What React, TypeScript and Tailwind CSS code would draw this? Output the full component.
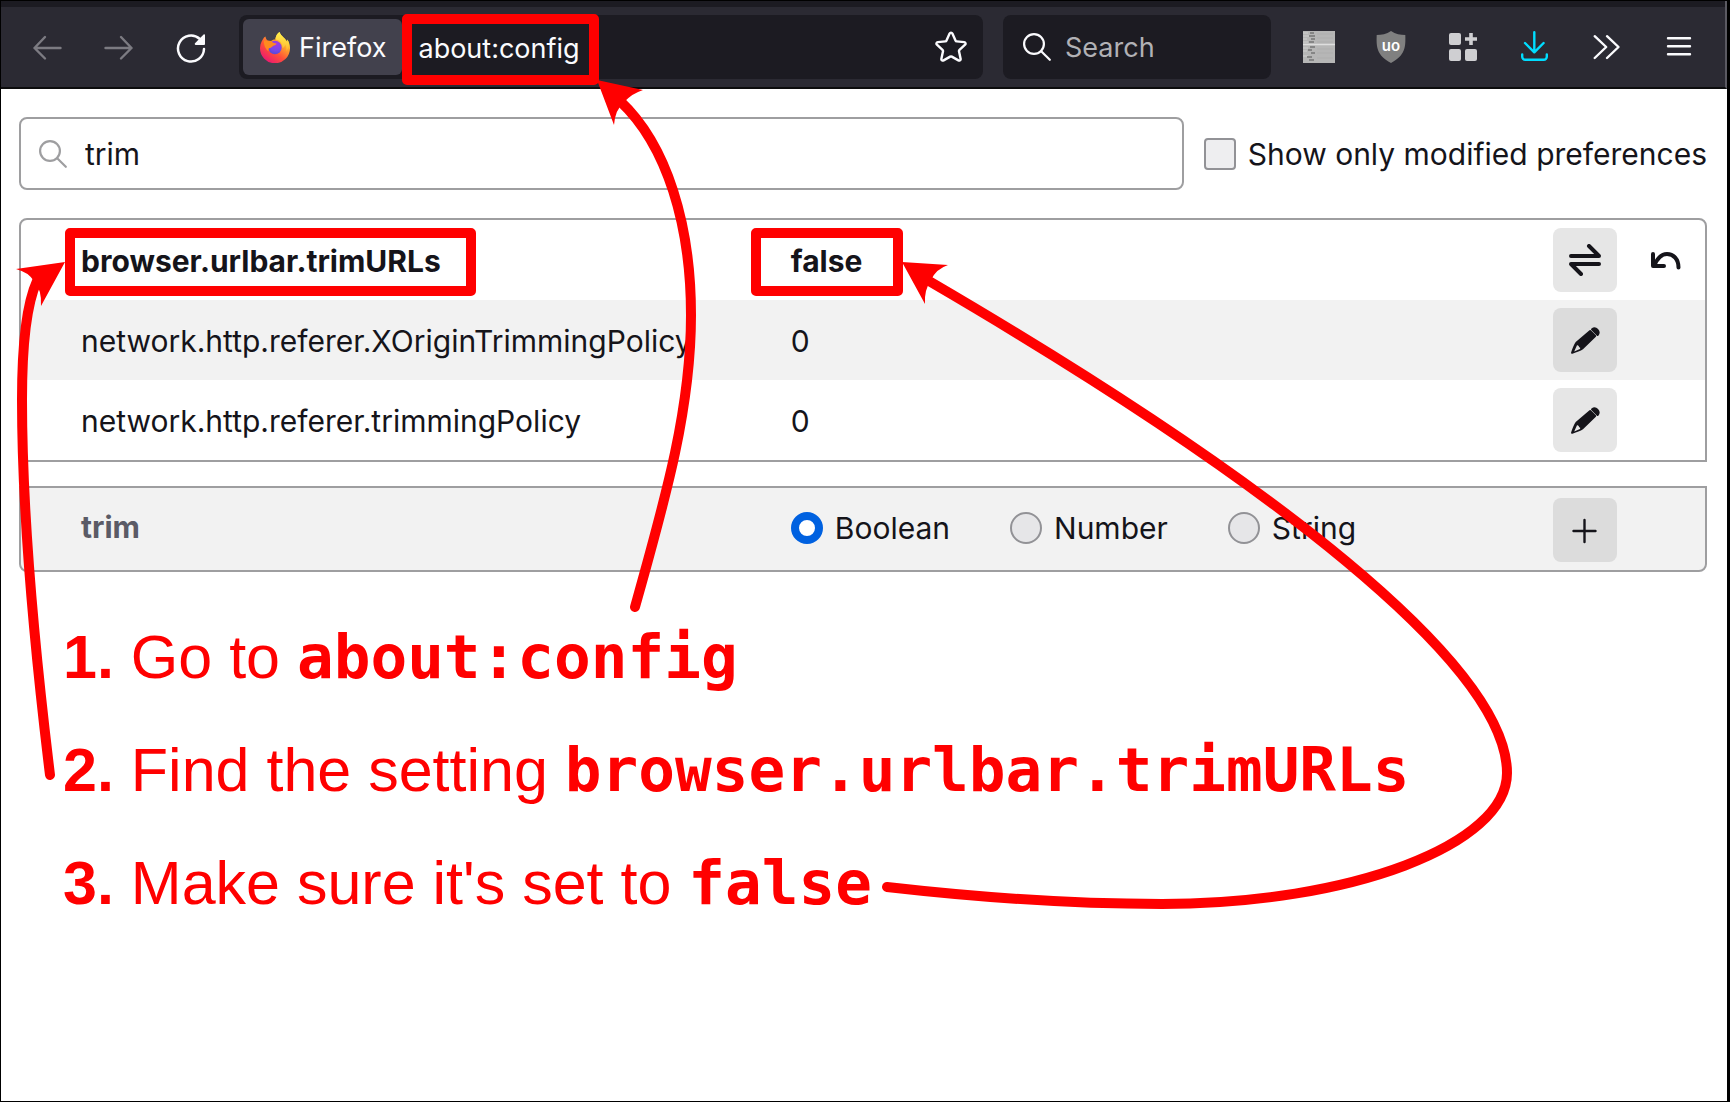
import React from "react";

type IconProps = { className?: string };

function ArrowLeft({ className = "" }: IconProps) {
  return (
    <svg viewBox="0 0 32 32" className={`size-8 ${className}`} fill="none" stroke="currentColor" strokeWidth="2.4" strokeLinecap="round" strokeLinejoin="round" aria-hidden="true">
      <path d="M29.500 17H3.500M14 6 3.500 17 14 27.500" />
    </svg>
  );
}

function ReloadIcon() {
  return (
    <svg viewBox="0 0 32 32" className="size-8" fill="none" aria-hidden="true">
      <path d="M29 18A13 13 0 1 1 24.600 7.800" stroke="currentColor" strokeWidth="2.500" strokeLinecap="round" />
      <path d="M30 4v9a1 1 0 0 1-1 1h-8.300c-.9 0-1.300-1-.7-1.700L28.600 3.500c.6-.6 1.400-.2 1.400.5z" fill="currentColor" />
    </svg>
  );
}

function FirefoxLogo() {
  return (
    <svg viewBox="0 0 32 32" className="size-8 shrink-0" aria-hidden="true">
      <defs>
        <linearGradient id="flame" x1="0.85" y1="0.1" x2="0.2" y2="1">
          <stop offset="0" stopColor="#fff44f" />
          <stop offset="0.3" stopColor="#ffa12c" />
          <stop offset="0.6" stopColor="#ff4f38" />
          <stop offset="1" stopColor="#e8107a" />
        </linearGradient>
        <linearGradient id="tail" x1="0.6" y1="0" x2="0.5" y2="1">
          <stop offset="0" stopColor="#fff44f" />
          <stop offset="1" stopColor="#ffb52e" />
        </linearGradient>
        <radialGradient id="globe" cx="0.6" cy="0.2" r="0.9">
          <stop offset="0" stopColor="#a43ae0" />
          <stop offset="0.6" stopColor="#7548e8" />
          <stop offset="1" stopColor="#4b4ad0" />
        </radialGradient>
      </defs>
      <path d="M5 6.500C3.500 9 1.200 12 1 17a15 15 0 0 0 30 .5c.2-4-1.200-7-3-9 .3 1.300.3 2 .2 2.800C26.500 7 22 5.500 20.500 1 17 3.500 16.500 7 16.500 8.500c-2-.1-3.500.6-4.500 1.500-1-.4-2-.4-3-.2C7.500 9 6.800 7.500 6.500 5.500z" fill="url(#flame)" />
      <path d="M20.500 1c-3.500 2.500-4 6-4 7.500 4 .5 7 3.500 7 8.500 1.500-.6 2.600-2 2.800-3.500 1 1.600 1.500 4 1 6.500 3.500-4 3.500-9 .7-11.500.3 1.300.3 2 .2 2.800C26.500 7 22 5.500 20.500 1z" fill="url(#tail)" />
      <circle cx="16" cy="16.500" r="6.700" fill="url(#globe)" />
      <path d="M5 9.500c2 .2 3 .4 4.500.3 1 .4 2 .4 3 .6 1.500 1 2.500 2 5 2.100-.3 1.500-2.500 2-3.500 2.500-1.500.8-1.500 2-3.200 2-1.300 0-1.800 1.500-1 3.500C6 18 4.500 13 5 9.500z" fill="#ff8a1f" />
    </svg>
  );
}

function StarIcon() {
  return (
    <svg viewBox="0 0 32 32" className="size-8 shrink-0" fill="none" stroke="currentColor" strokeWidth="2.400" strokeLinejoin="round" aria-hidden="true">
      <path d="M14.600 2.500c.6-1.200 2.200-1.200 2.800 0l3.100 7.100c.2.500.7.800 1.200.8l7.500.7c1.300.1 1.800 1.700.9 2.600l-5.600 5.100c-.4.400-.6.900-.5 1.400l1.600 7.600c.3 1.300-1.100 2.200-2.200 1.600l-6.600-3.800c-.5-.3-1.100-.3-1.600 0l-6.600 3.800c-1.100.6-2.500-.3-2.200-1.600L8 20.200c.1-.5-.1-1-.5-1.400l-5.600-5.100c-.9-.9-.4-2.500.9-2.600l7.500-.7c.5 0 1-.3 1.200-.8z" />
    </svg>
  );
}

function Magnifier({ className = "" }: IconProps) {
  return (
    <svg viewBox="0 0 28 28" className={`size-7 shrink-0 ${className}`} fill="none" stroke="currentColor" strokeWidth="2.200" strokeLinecap="round" aria-hidden="true">
      <circle cx="11" cy="11" r="9.900" />
      <path d="m18.200 18.200 8.600 8.600" />
    </svg>
  );
}

function PageThumbIcon() {
  return (
    <svg viewBox="0 0 32 32" className="size-8" aria-hidden="true">
      <rect width="32" height="32" fill="#b6b6b6" />
      <path d="M0 2h5M0 5h6M0 8h4M0 11h5M0 17h5M0 20h4M0 25h5" stroke="#c8c8c8" strokeWidth="1.500" />
      <path d="M7 2h4M6 5h6M8 8h4M6 11h5M7 16h5M5 19h4M8 22h4M4 26h5M6 29h5" stroke="#858585" strokeWidth="2.200" />
      <path d="M14 3h16M14 7h16M14 11h16M14 18h16M14 22h16M14 27h16" stroke="#adadad" strokeWidth="1.200" />
      <path d="M0 13.500h32" stroke="#dedede" strokeWidth="1.500" />
    </svg>
  );
}

function ShieldIcon() {
  return (
    <svg viewBox="0 0 32 32" className="size-8" aria-hidden="true">
      <path d="M16 0c4.500 3 9.500 4 14.300 4 .4 12 .2 20-14.300 28C1.500 24 1.300 16 1.700 4 6.500 4 11.500 3 16 0z" fill="#808080" />
      <text x="16" y="20" textAnchor="middle" fontSize="15" fontWeight="600" fontFamily="Inter, sans-serif" fill="#fff">uo</text>
    </svg>
  );
}

function GridPlusIcon() {
  return (
    <svg viewBox="0 0 32 32" className="size-8" fill="#cfcfd2" aria-hidden="true">
      <rect x="2" y="2" width="12" height="12" rx="2" />
      <rect x="2" y="18" width="12" height="12" rx="2" />
      <rect x="18" y="18" width="12" height="12" rx="2" />
      <path d="M22.200 2h3.600v4.200H30v3.600h-4.200V14h-3.600V9.800H18V6.200h4.200z" />
    </svg>
  );
}

function DownloadIcon() {
  return (
    <svg viewBox="0 0 32 32" className="size-8 text-[#00ddff]" fill="none" stroke="currentColor" strokeWidth="2.400" strokeLinecap="round" strokeLinejoin="round" aria-hidden="true">
      <path d="M15.300 1.200V21M6 12l9.300 9.300L24.600 12M3.200 23.500v2.300a3 3 0 0 0 3 3h18.600a3 3 0 0 0 3-3v-2.300" />
    </svg>
  );
}

function ChevronsIcon() {
  return (
    <svg viewBox="0 0 32 32" className="size-8" fill="none" stroke="currentColor" strokeWidth="2.400" strokeLinecap="round" strokeLinejoin="round" aria-hidden="true">
      <path d="M3.700 5.200 15.200 16 3.700 27M16 5.200 27.500 16 16 27" />
    </svg>
  );
}

function MenuIcon() {
  return (
    <svg viewBox="0 0 32 32" className="size-8" fill="none" stroke="currentColor" strokeWidth="2.400" strokeLinecap="round" aria-hidden="true">
      <path d="M5 7.300h22M5 15.300h22M5 23.300h22" />
    </svg>
  );
}

function ToggleIcon() {
  return (
    <svg viewBox="0 0 32 32" className="size-8" fill="none" stroke="currentColor" strokeWidth="4" strokeLinecap="round" strokeLinejoin="round" aria-hidden="true">
      <path d="M2 12h28L20 2M30 20H2l10 10" />
    </svg>
  );
}

function PencilIcon() {
  return (
    <svg viewBox="0 0 32 32" className="size-8" fill="currentColor" aria-hidden="true">
      <path d="M20.500 6.200a1 1 0 0 1 1.400.1l5 5a1 1 0 0 1 0 1.400L14 25.300c-2.500 1.700-6 3-10.600 4.400a1 1 0 0 1-1.300-1.300C3.600 23.800 5 20.500 6.700 18zM8 21.200 5.200 27.500l5.800-2.600c.5-.9.2-1.600-.8-1.700-.4-1.400-1.200-2-2.200-2z" fillRule="evenodd" />
      <path d="M22.500 4.500a5 5 0 0 1 7 7c-.6.700-1 .7-1.600.2L22.300 6c-.5-.5-.4-1 .2-1.500z" />
    </svg>
  );
}

function UndoIcon() {
  return (
    <svg viewBox="0 0 32 32" className="size-8" fill="none" stroke="currentColor" strokeWidth="4" strokeLinecap="round" strokeLinejoin="round" aria-hidden="true">
      <path d="M4 10v12h11M5.500 21C9 13 13 10 18 10 24.500 10 29.500 15 29.500 23.500" />
    </svg>
  );
}

function PlusIcon() {
  return (
    <svg viewBox="0 0 32 32" className="size-8" fill="none" stroke="currentColor" strokeWidth="2.400" strokeLinecap="round" aria-hidden="true">
      <path d="M4.500 17h22M15.500 6v22" />
    </svg>
  );
}

function ToolbarButton({ label, disabled, children }: { label: string; disabled?: boolean; children: React.ReactNode }) {
  return (
    <button type="button" aria-label={label} disabled={disabled} className="flex h-16 w-[72px] shrink-0 items-center justify-center text-[#fbfbfe] disabled:text-[#7c7b82]">
      {children}
    </button>
  );
}

function Toolbar() {
  return (
    <header className="border-r-2 border-b-2 border-r-[#5b5a62] border-b-[#0c0c0d] bg-[#2b2a33]">
      <div className="h-[6px] bg-[#1c1b22]" />
      <div className="flex items-center py-2 pr-[10px] pl-[10px]">
        <nav className="flex" aria-label="Navigation">
          <ToolbarButton label="Back" disabled><ArrowLeft /></ToolbarButton>
          <ToolbarButton label="Forward" disabled><ArrowLeft className="-scale-x-100" /></ToolbarButton>
          <ToolbarButton label="Reload"><ReloadIcon /></ToolbarButton>
        </nav>
        <div className="ml-3 flex h-16 min-w-0 flex-1 items-center rounded-lg bg-[#1c1b22] p-1 text-[27px] text-[#fbfbfe]">
          <button type="button" className="flex h-14 shrink-0 items-center gap-2 rounded-md bg-[#42414d] px-4">
            <FirefoxLogo />
            <span className="pt-0.5">Firefox</span>
          </button>
          <input aria-label="Address" defaultValue="about:config" className="h-14 min-w-0 flex-1 bg-transparent pt-0.5 pl-4 outline-none" />
          <button type="button" aria-label="Bookmark this page" className="flex h-14 w-14 items-center justify-center"><StarIcon /></button>
        </div>
        <label className="ml-5 flex h-16 w-[268px] items-center gap-[14px] rounded-lg bg-[#1c1b22] px-5 text-[27px] text-[#fbfbfe]">
          <Magnifier />
          <input aria-label="Search" placeholder="Search" className="w-full min-w-0 bg-transparent pt-0.5 outline-none placeholder:text-[#b1b1b5]" />
        </label>
        <div className="ml-3 flex">
          <ToolbarButton label="Page preview"><PageThumbIcon /></ToolbarButton>
          <ToolbarButton label="uBlock Origin"><ShieldIcon /></ToolbarButton>
          <ToolbarButton label="Add-ons"><GridPlusIcon /></ToolbarButton>
          <ToolbarButton label="Downloads"><DownloadIcon /></ToolbarButton>
          <ToolbarButton label="More tools"><ChevronsIcon /></ToolbarButton>
          <ToolbarButton label="Menu"><MenuIcon /></ToolbarButton>
        </div>
      </div>
    </header>
  );
}

const prefs = [
  { name: "browser.urlbar.trimURLs", value: "false", modified: true },
  { name: "network.http.referer.XOriginTrimmingPolicy", value: "0", modified: false },
  { name: "network.http.referer.trimmingPolicy", value: "0", modified: false },
];

function Columns() {
  return (
    <colgroup>
      <col className="w-[45%]" />
      <col />
      <col className="w-20" />
      <col className="w-[72px]" />
    </colgroup>
  );
}

function PrefTable() {
  return (
    <div className="overflow-hidden rounded-t-lg border-2 border-[#9e9ea0]">
      <table className="w-full table-fixed border-collapse">
        <Columns />
        <tbody>
          {prefs.map((p) => {
            const weight = p.modified ? "font-bold" : "font-normal";
            return (
              <tr key={p.name} className="group h-20 even:bg-[#f2f2f2]">
                <th scope="row" className={`p-0 pt-0.5 pl-[60px] text-left whitespace-nowrap ${weight}`}>{p.name}</th>
                <td className={`p-0 pt-0.5 pl-3 ${weight}`}>{p.value}</td>
                <td className="p-0">
                  <button type="button" aria-label={p.modified ? "Toggle" : "Edit"} className="flex size-16 items-center justify-center rounded-lg bg-[#e6e6e6] group-even:bg-[#dcdcdc]">
                    {p.modified ? <ToggleIcon /> : <PencilIcon />}
                  </button>
                </td>
                <td className="p-0">
                  {p.modified && (
                    <button type="button" aria-label="Reset" className="flex size-16 items-center justify-center rounded-lg">
                      <UndoIcon />
                    </button>
                  )}
                </td>
              </tr>
            );
          })}
        </tbody>
      </table>
    </div>
  );
}

function AddPref() {
  return (
    <div className="mt-6 overflow-hidden rounded-b-lg border-2 border-[#9e9ea0] bg-[#f2f2f2]">
      <table className="w-full table-fixed border-collapse">
        <Columns />
        <tbody>
          <tr className="h-[82px]">
            <th scope="row" className="p-0 pb-1 pl-[60px] text-left font-bold text-[#5b5b66]">trim</th>
            <td className="p-0 pb-[3px] pl-3">
              <div className="flex gap-[60px]">
                {["Boolean", "Number", "String"].map((type) => (
                  <label key={type} className="flex items-center gap-3">
                    <input type="radio" name="type" defaultChecked={type === "Boolean"} className="size-8 appearance-none rounded-full border-2 border-[#929296] bg-[#e6e6e8] checked:border-8 checked:border-[#0061e0] checked:bg-white" />
                    {type}
                  </label>
                ))}
              </div>
            </td>
            <td className="p-0 pt-0.5">
              <button type="button" aria-label="Add" className="flex size-16 items-center justify-center rounded-lg bg-[#dcdcdc]"><PlusIcon /></button>
            </td>
            <td className="p-0" />
          </tr>
        </tbody>
      </table>
    </div>
  );
}

function Steps() {
  const code = "font-['DejaVu_Sans_Mono',monospace] text-[61px] font-bold";
  return (
    <ol className="mt-[45px] flex flex-col gap-[33px] pl-[44px] font-['Liberation_Sans',Arial,sans-serif] text-[61px] leading-[80px] text-[#ff0000]">
      <li><b>1.</b> Go to <code className={code}>about:config</code></li>
      <li><b>2.</b> Find the setting <code className={code}>browser.urlbar.trimURLs</code></li>
      <li><b>3.</b> Make sure it's set to <code className={code}>false</code></li>
    </ol>
  );
}

/* Highlight frames and arrows that float over the window. */
function Annotations() {
  return (
    <svg width="1728" height="1100" viewBox="1 1 1728 1100" className="pointer-events-none absolute top-0 left-0" fill="none" stroke="#ff0000" strokeWidth="10" strokeLinejoin="round" strokeLinecap="round" aria-hidden="true">
      <rect x="407" y="19" width="187" height="61" />
      <rect x="70" y="233" width="401" height="58" />
      <rect x="756" y="233" width="142" height="58" />
      <path d="M635 607C665 500 691 410 691 315C691 225 667 145 620 101" />
      <path d="M50 775C36 660 22 520 22 400C22 350 26 305 37 281" />
      <path d="M887 887C1010 901 1100 904 1162 904C1350 904 1507 845 1507 773C1507 665 1270 480 929 281" />
      <g fill="#ff0000" stroke="none">
        <path d="M597 80 643 90Q633 93 624 102Q615 110 614 125z" />
        <path d="M65 262 16 269Q28 272 34 281Q42 290 41 306z" />
        <path d="M902 262 948 265Q936 269 931 280Q924 290 925 304z" />
      </g>
    </svg>
  );
}

export default function App() {
  return (
    <div className="relative min-h-screen overflow-hidden border border-r-3 border-black bg-white font-[Inter,sans-serif] text-[30px] leading-9 text-[#15141a]">
      <Toolbar />
      <main className="pt-7 pr-5 pl-[18px]">
        <div className="mb-7 flex items-center gap-5">
          <label className="flex h-[73px] min-w-0 flex-1 items-center gap-[18px] rounded-lg border-2 border-[#9e9ea0] px-[18px]">
            <Magnifier className="text-[#9e9ea0]" />
            <input aria-label="Search preference name" defaultValue="trim" className="min-w-0 flex-1 bg-transparent outline-none" />
          </label>
          <label className="flex shrink-0 items-center gap-3">
            <input type="checkbox" className="size-8 appearance-none rounded border-2 border-[#929296] bg-[#eeeef0]" />
            Show only modified preferences
          </label>
        </div>
        <PrefTable />
        <AddPref />
        <Steps />
      </main>
      <Annotations />
    </div>
  );
}
